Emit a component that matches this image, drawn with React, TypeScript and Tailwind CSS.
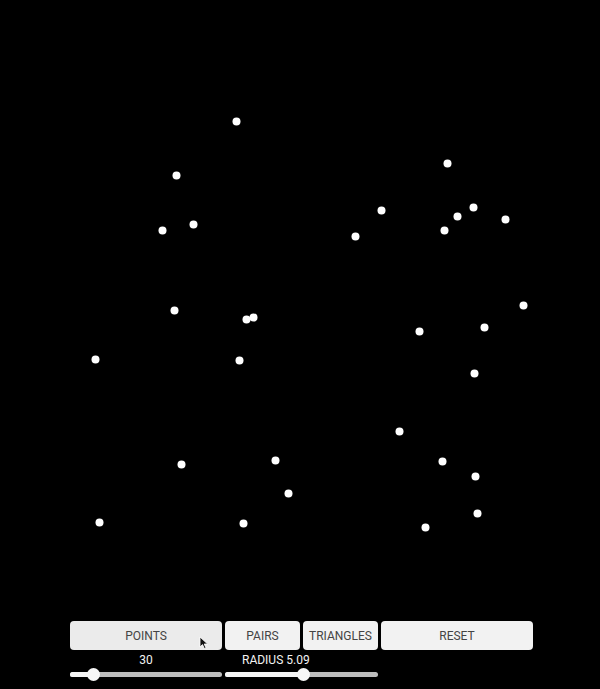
import React from 'react';

const points: [number, number][] = [
  [236, 121], [176, 175], [193, 224], [162, 230], [174, 310], [246, 319], [253, 317],
  [95, 359], [239, 360], [181, 464], [275, 460], [288, 493], [99, 522], [243, 523],
  [447, 163], [381, 210], [457, 216], [473, 207], [505, 219], [444, 230], [355, 236],
  [523, 305], [419, 331], [484, 327], [474, 373], [399, 431], [442, 461], [475, 476],
  [477, 513], [425, 527],
];

type SliderProps = { label: string; pos: number; width: string; labelClass?: string };

function Slider({ label, pos, width, labelClass }: SliderProps) {
  return (
    <div className={width + " flex flex-col"}>
      <div className={"h-[16px] text-[12px] leading-[16px] text-[#f2f2f2] " + (labelClass ?? "text-center")}>{label}</div>
      <div className="relative h-[13px] flex items-center">
        <div className="w-full h-[5px] rounded-full bg-[#bdbdbd]" />
        <div className="absolute left-0 h-[5px] rounded-full bg-[#f5f5f5]" style={{ width: pos }} />
        <div
          className="absolute w-[13px] h-[13px] rounded-full bg-[#f7f7f7] top-0"
          style={{ left: pos - 6.5 }}
        />
      </div>
    </div>
  );
}

export default function App() {
  return (
    <div className="w-[600px] h-[689px] bg-black flex flex-col font-['Roboto',Arial,sans-serif]">
      <svg width="600" height="621" className="block shrink-0">
        {points.map(([x, y], i) => (
          <circle key={i} cx={x + 0.5} cy={y + 0.5} r={4} fill="#fff" />
        ))}
      </svg>
      <div className="pl-[70px] flex gap-[3px]">
        <button className="relative w-[152px] h-[29px] rounded-[4px] bg-[#ebebeb] text-[#444] text-[12px]">
          POINTS
          <svg className="absolute left-[129px] top-[15px]" width="10" height="14" viewBox="0 0 10 14">
            <path d="M1 1 L1 11 L3.5 8.6 L5.4 12.6 L7 11.9 L5.2 8 L8.6 8 Z" fill="#111" stroke="#fff" strokeWidth="0.8" />
          </svg>
        </button>
        <button className="w-[75px] h-[29px] rounded-[4px] bg-[#f2f2f2] text-[#444] text-[12px]">PAIRS</button>
        <button className="w-[75px] h-[29px] rounded-[4px] bg-[#f2f2f2] text-[#444] text-[12px]">TRIANGLES</button>
        <button className="w-[152px] h-[29px] rounded-[4px] bg-[#f2f2f2] text-[#444] text-[12px]">RESET</button>
      </div>
      <div className="pl-[70px] pt-[2px] flex gap-[3px]">
        <Slider label="30" pos={23} width="w-[152px]" />
        <Slider label="RADIUS 5.09" pos={78} width="w-[153px]" labelClass="pl-[17px]" />
      </div>
    </div>
  );
}
